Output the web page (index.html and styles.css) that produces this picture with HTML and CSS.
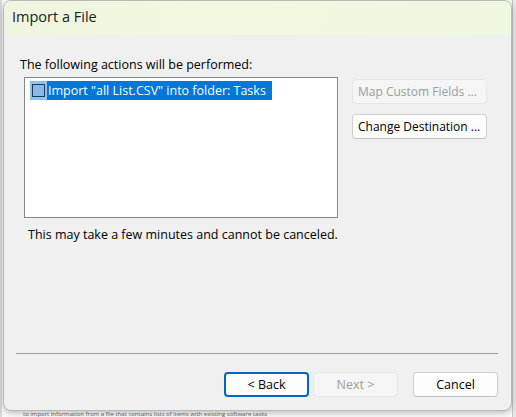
FILE: index.html
```html
<!DOCTYPE html>
<html>
<head>
<meta charset="utf-8">
<link rel="stylesheet" href="styles.css">
</head>
<body>
<div class="desk">
  <div class="dialog">
    <div class="titlebar">Import a File</div>
    <div class="content">
      <div class="label">The following actions will be performed:</div>
      <div class="row">
        <div class="listbox">
          <div class="item">
            <span class="chkwrap"><span class="chk"></span></span>
            <span class="itemtext">Import "all List.CSV" into folder: Tasks</span>
          </div>
        </div>
        <div class="side">
          <button class="btn side-btn" disabled>Map Custom Fields ...</button>
          <button class="btn side-btn">Change Destination ...</button>
        </div>
      </div>
      <div class="note">This may take a few minutes and cannot be canceled.</div>
      <div class="sep"></div>
      <div class="footer">
        <button class="btn foot-btn default">&lt; Back</button>
        <button class="btn foot-btn" disabled>Next &gt;</button>
        <button class="btn foot-btn cancel">Cancel</button>
      </div>
    </div>
  </div>
  <div class="behind">to import information from a file that contains lists of items with existing software tasks</div>
</div>
</body>
</html>
```
FILE: styles.css
```css
* { box-sizing: border-box; }
html, body {
  margin: 0;
  padding: 0;
  width: 516px;
  height: 417px;
  overflow: hidden;
  background: #f4f4f4;
  font-family: "Segoe UI", "Open Sans", "Noto Sans", sans-serif;
}
.desk {
  width: 516px;
  height: 417px;
  padding-left: 3px;
  background:
    linear-gradient(to right, #d9d9d9 0 2px, transparent 2px) left top / 3px 100% no-repeat,
    linear-gradient(to right, #c8c8c8 0 1px, #e9e9e9 1px) 512px 0 / 4px 100% no-repeat,
    #fafafa;
}
.dialog {
  width: 509px;
  height: 411px;
  background: #f0f0f0;
  border: 1px solid #b9b9b9;
  border-radius: 8px;
  box-shadow: 0 2px 6px rgba(0,0,0,0.25);
  display: flex;
  flex-direction: column;
  overflow: hidden;
}
.titlebar {
  height: 34px;
  flex: none;
  background: linear-gradient(100deg, #eef6df 0%, #f2f8e0 45%, #eef7e1 100%);
  font-size: 14.5px;
  color: #1a1a1a;
  padding: 6px 0 0 8px;
  line-height: 20px;
}
.content {
  flex: 1;
  display: flex;
  flex-direction: column;
  padding: 0 13px 0 11px;
}
.label {
  font-size: 12.5px;
  line-height: 17px;
  margin-top: 21px;
  padding-left: 5px;
  color: #000;
}
.row {
  display: flex;
  margin-top: 4px;
}
.listbox {
  width: 314px;
  height: 141px;
  margin-left: 9px;
  background: #fff;
  border: 1px solid #828790;
  padding: 3px 5px;
}
.item {
  display: flex;
  height: 19px;
  align-items: stretch;
}
.chkwrap {
  width: 17px;
  background: #8fc0ee;
  display: flex;
  align-items: center;
  padding-left: 2px;
}
.chk {
  width: 13px;
  height: 13px;
  border: 1px solid #1f3b5a;
  background: #8ab8e6;
}
.itemtext {
  background: #0078d7;
  color: #fff;
  font-size: 12.5px;
  line-height: 19px;
  padding: 0 6px 0 1px;
}
.side {
  display: flex;
  flex-direction: column;
  gap: 10px;
  margin-left: 14px;
  margin-top: 2px;
}
.btn {
  font-family: inherit;
  font-size: 12.5px;
  color: #000;
  background: #fdfdfd;
  border: 1px solid #d0d0d0;
  border-bottom-color: #c2c2c2;
  border-radius: 4px;
  height: 25px;
  padding: 0;
  line-height: 21px;
  white-space: nowrap;
}
.btn:disabled {
  background: #f5f5f5;
  color: #9d9d9d;
  border-color: #e6e6e6;
}
.side-btn {
  width: 135px;
  text-align: left;
  padding-left: 5px;
  font-size: 12px;
}
.note {
  font-size: 12.5px;
  line-height: 17px;
  margin-top: 8px;
  padding-left: 13px;
  color: #000;
}
.sep {
  height: 1px;
  background: #a0a0a0;
  margin: 110px 0 0 1px;
}
.footer {
  display: flex;
  justify-content: flex-end;
  margin-top: 18px;
}
.foot-btn {
  width: 85px;
  margin-left: 4px;
}
.foot-btn.default {
  border: 2px solid #0067c0;
  line-height: 19px;
}
.foot-btn.cancel {
  margin-left: 15px;
}
.behind {
  font-size: 6px;
  color: #555;
  white-space: nowrap;
  padding-left: 20px;
  line-height: 6px;
}
```
